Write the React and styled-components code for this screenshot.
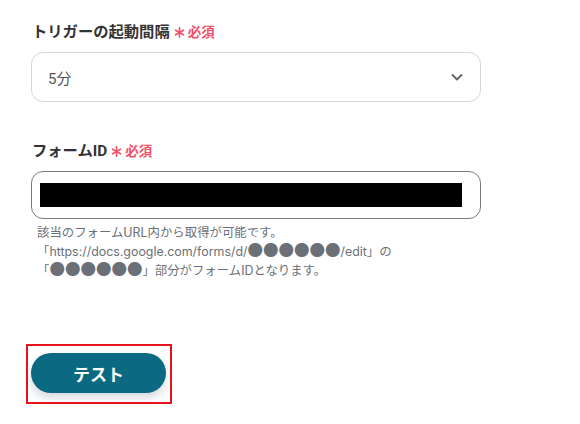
import React from "react";
import styled, { createGlobalStyle } from "styled-components";

const Global = createGlobalStyle`
  html, body { margin: 0; padding: 0; background: #ffffff; }
  body { font-family: Roboto, "Noto Sans CJK JP", sans-serif; }
`;

const Page = styled.div`
  width: 580px;
  height: 424px;
  box-sizing: border-box;
  padding: 21px 0 0 31px;
  display: flex;
  flex-direction: column;
`;

const Field = styled.div`
  width: 450px;
  display: flex;
  flex-direction: column;
  margin-bottom: ${(p) => p.$mb || 0}px;
`;

const Label = styled.div`
  display: flex;
  align-items: center;
  padding-left: 1px;
  font-size: 15.3px;
  line-height: 22px;
  font-weight: 700;
  color: #333333;
  margin-bottom: 9px;
`;

const Required = styled.span`
  color: #f2506b;
  font-size: 13.5px;
  font-weight: 700;
  display: inline-flex;
  align-items: center;
  margin-left: 4px;
  gap: 3px;
`;

const Select = styled.div`
  box-sizing: border-box;
  height: 50px;
  border: 1px solid #d3d7de;
  border-radius: 12px;
  display: flex;
  align-items: center;
  justify-content: space-between;
  padding: 0 16px 0 16px;
  font-size: 15px;
  color: #555555;
`;

const Input = styled.div`
  box-sizing: border-box;
  height: 48px;
  border: 1px solid #7a7a7a;
  border-radius: 12px;
  display: flex;
  align-items: center;
  padding: 0 18px 0 8px;
`;

const Redacted = styled.div`
  flex: 1;
  height: 24px;
  background: #000000;
`;

const Help = styled.div`
  margin-top: 4px;
  padding-left: 6px;
  font-family: Inter, "Noto Sans CJK JP", sans-serif;
  font-size: 12.4px;
  line-height: 19px;
  color: #6b6f76;
`;

const Dots = styled.span`
  font-family: "Noto Sans CJK JP", sans-serif;
  font-size: 15.5px;
  line-height: 1;
`;

const Frame = styled.div`
  align-self: flex-start;
  margin-left: -5px;
  border: 2px solid #e8141b;
  padding: 7px 4px 9px 3px;
`;

const Button = styled.button`
  width: 135px;
  height: 40px;
  border: none;
  border-radius: 20px;
  background: #0b6a82;
  color: #ffffff;
  font-family: Roboto, "Noto Sans CJK JP", sans-serif;
  font-size: 17px;
  font-weight: 700;
  box-shadow: 0 5px 10px rgba(30, 50, 70, 0.18);
  display: block;
  cursor: pointer;
`;

const Chevron = () => (
  <svg width="14" height="14" viewBox="0 0 14 14" fill="none">
    <path d="M2.5 5 L7 9.5 L11.5 5" stroke="#666" strokeWidth="2" strokeLinecap="round" strokeLinejoin="round" />
  </svg>
);

const Star = () => (
  <svg width="11" height="11" viewBox="0 0 12 12" fill="none">
    <g stroke="#f2506b" strokeWidth="1.8" strokeLinecap="round">
      <path d="M6 1 L6 11" />
      <path d="M1.7 3.5 L10.3 8.5" />
      <path d="M1.7 8.5 L10.3 3.5" />
    </g>
  </svg>
);

export default function App() {
  return (
    <>
      <Global />
      <Page>
        <Field $mb={38}>
          <Label>
            トリガーの起動間隔
            <Required>
              <Star />必須
            </Required>
          </Label>
          <Select>
            <span>5分</span>
            <Chevron />
          </Select>
        </Field>
        <Field $mb={64}>
          <Label>
            フォームID
            <Required>
              <Star />必須
            </Required>
          </Label>
          <Input>
            <Redacted />
          </Input>
          <Help>
            該当のフォームURL内から取得が可能です。
            <br />
            「https://docs.google.com/forms/d/<Dots>●●●●●●</Dots>/edit」の
            <br />
            「<Dots>●●●●●●</Dots>」部分がフォームIDとなります。
          </Help>
        </Field>
        <Frame>
          <Button>テスト</Button>
        </Frame>
      </Page>
    </>
  );
}
